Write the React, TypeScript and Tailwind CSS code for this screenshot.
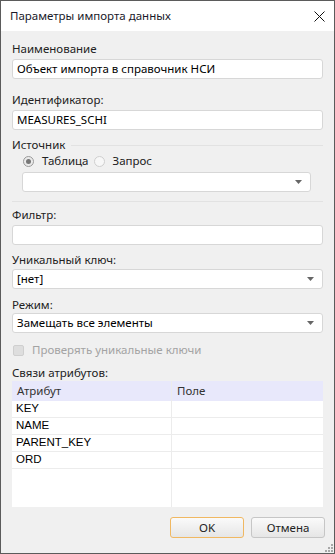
import React from "react";

const ui = { fontFamily: '"Noto Sans", "Open Sans", sans-serif' };
const grid = { fontFamily: '"Liberation Sans", Arial, sans-serif' };

function Label({ text, className = "" }: { text: string; className?: string }) {
  return (
    <div className={`h-4 leading-4 text-[11.5px] text-[#222] ${className}`}>{text}</div>
  );
}

function TextBox({ value = "", className = "" }: { value?: string; className?: string }) {
  return (
    <div
      className={`h-5 bg-white border border-[#d7d7d7] rounded-[3px] px-[4px] flex items-center text-[11.5px] text-black ${className}`}
    >
      {value}
    </div>
  );
}

function Combo({ value = "", className = "" }: { value?: string; className?: string }) {
  return (
    <div
      className={`h-5 bg-white border border-[#d7d7d7] rounded-[3px] pl-[4px] pr-[8px] flex items-center text-[11.5px] text-black ${className}`}
    >
      <span className="flex-1">{value}</span>
      <svg width="7" height="4" viewBox="0 0 7 4">
        <path d="M0 0h7L3.5 4z" fill="#666" />
      </svg>
    </div>
  );
}

const rows = ["KEY", "NAME", "PARENT_KEY", "ORD"];

export default function App() {
  return (
    <div
      className="w-[335px] h-[554px] border border-[#5b5b5b] flex flex-col bg-[#f0f0f0] overflow-hidden"
      style={ui}
    >
      <div className="h-[30px] bg-white flex items-center pl-[9px] pr-[9px] shrink-0">
        <span className="flex-1 text-[11.5px] text-[#1a1a2a]">Параметры импорта данных</span>
        <svg width="11" height="11" viewBox="0 0 11 11">
          <path d="M0.5 0.5l10 10M10.5 0.5l-10 10" stroke="#111" strokeWidth="1" />
        </svg>
      </div>

      <div className="flex-1 flex flex-col px-[11px] pt-[10px]">
        <Label text="Наименование" />
        <TextBox value="Объект импорта в справочник НСИ" className="mt-[2px]" />

        <Label text="Идентификатор:" className="mt-[13px]" />
        <TextBox value="MEASURES_SCHI" className="mt-[2px]" />

        <div className="mt-[7px] flex items-center gap-[6px]">
          <Label text="Источник" />
          <div className="flex-1 h-px bg-[#e2e2e2]" />
        </div>
        <div className="pl-[11px] flex items-center h-[16px] text-[11.5px] text-[#222]">
          <span className="w-[11px] h-[11px] rounded-full border border-[#9a9a9a] bg-[#eaeaea] flex items-center justify-center">
            <span className="w-[5px] h-[5px] rounded-full bg-[#777]" />
          </span>
          <span className="ml-[8px]">Таблица</span>
          <span className="ml-[5px] w-[11px] h-[11px] rounded-full border border-[#cfcfcf] bg-[#f7f7f7]" />
          <span className="ml-[8px]">Запрос</span>
        </div>
        <div className="pl-[10px] pr-[12px] mt-[3px]">
          <Combo />
        </div>

        <div className="mt-[9px] h-px bg-[#e2e2e2]" />

        <Label text="Фильтр:" className="mt-[5px]" />
        <TextBox className="mt-[2px]" />

        <Label text="Уникальный ключ:" className="mt-[7px]" />
        <Combo value="[нет]" className="mt-[1px]" />

        <Label text="Режим:" className="mt-[8px]" />
        <Combo value="Замещать все элементы" className="mt-[0px]" />

        <div className="mt-[9px] flex items-center h-4 pl-[1px]">
          <span className="w-[11px] h-[11px] rounded-[2px] border border-[#cfcfcf] bg-[#dedede]" />
          <span className="ml-[8px] text-[11.5px] text-[#a3a3a3]">Проверять уникальные ключи</span>
        </div>

        <Label text="Связи атрибутов:" className="mt-[7px]" />
        <div className="h-[126px] bg-white flex flex-col">
          <div className="h-[20px] bg-[#e8e8fb] flex text-[11.5px] text-[#333]">
            <div className="w-[160px] pl-[5px] flex items-center border-r border-[#ececec]">Атрибут</div>
            <div className="flex-1 pl-[5px] flex items-center">Поле</div>
          </div>
          {rows.map((r) => (
            <div key={r} className="h-[17px] flex border-b border-[#ececec] text-[11.5px] text-black" style={grid}>
              <div className="w-[160px] pl-[4px] flex items-center border-r border-[#ececec]">{r}</div>
              <div className="flex-1" />
            </div>
          ))}
          <div className="flex-1 flex">
            <div className="w-[160px] border-r border-[#ececec]" />
          </div>
        </div>

        <div className="mt-[10px] flex justify-end gap-[7px] mr-[-2px]">
          <button className="w-[74px] h-[21px] rounded-[3px] border border-[#f0b862] bg-gradient-to-b from-[#fafafa] to-[#e6e6e6] text-[11.5px] text-[#222]">
            OK
          </button>
          <button className="w-[74px] h-[21px] rounded-[3px] border border-[#c6c6c6] bg-gradient-to-b from-[#fafafa] to-[#e6e6e6] text-[11.5px] text-[#222]">
            Отмена
          </button>
        </div>
        <div className="flex-1 flex items-end justify-end mr-[-10px] pb-[1px]">
          <svg width="9" height="9" viewBox="0 0 9 9">
            <g fill="#a8a8a8">
              <rect x="7" y="1" width="2" height="2" />
              <rect x="4" y="4" width="2" height="2" />
              <rect x="7" y="4" width="2" height="2" />
              <rect x="1" y="7" width="2" height="2" />
              <rect x="4" y="7" width="2" height="2" />
              <rect x="7" y="7" width="2" height="2" />
            </g>
          </svg>
        </div>
      </div>
    </div>
  );
}
